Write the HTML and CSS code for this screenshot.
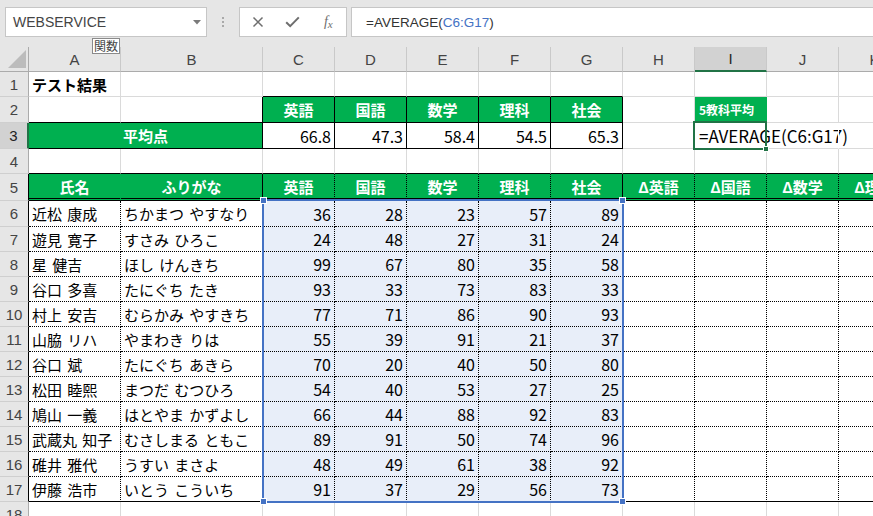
FILE: index.html
```html
<!DOCTYPE html>
<html lang="ja">
<head>
<meta charset="utf-8">
<title>Sheet</title>
<link rel="stylesheet" href="styles.css">
</head>
<body>
<div class="app">
  <div class="toolbar">
    <div class="namebox"><span>WEBSERVICE</span><svg class="nb-arrow" width="8" height="5" viewBox="0 0 8 5"><path d="M0 0H8L4 4.5Z" fill="#7a7a7a"/></svg></div>
    <div class="sep"><span></span><span></span><span></span></div>
    <div class="fxbtns">
      <div class="fxbtn"><svg width="12" height="12" viewBox="0 0 12 12"><path d="M1.5 1.5L10.5 10.5M10.5 1.5L1.5 10.5" stroke="#6e6e6e" stroke-width="1.5" fill="none"/></svg></div>
      <div class="fxbtn"><svg width="15" height="12" viewBox="0 0 15 12"><path d="M1.2 6.2L5.2 10.2L13.8 1.4" stroke="#6e6e6e" stroke-width="2" fill="none"/></svg></div>
      <div class="fxbtn fxlabel"><span class="f">f</span><span class="x">x</span></div>
    </div>
    <div class="formula">=AVERAGE(<span class="ref">C6:G17</span>)</div>
  </div>

  <div class="sheet">
    <div class="row colhdr">
      <div class="corner"><svg width="28" height="24" viewBox="0 0 28 24"><path d="M8 21L26 3V21Z" fill="#bcbcbc"/></svg></div>
      <div>A</div><div>B</div><div>C</div><div>D</div><div>E</div><div>F</div><div>G</div><div>H</div><div class="sel">I</div><div>J</div><div>K</div>
    </div>

    <div class="row r1">
      <div class="rh">1</div>
      <div class="b">テスト結果</div><div></div>
      <div class="bb"></div><div class="bb"></div><div class="bb"></div><div class="bb"></div><div class="bb"></div>
      <div></div><div></div><div></div><div></div>
    </div>

    <div class="row r2">
      <div class="rh">2</div>
      <div class="bb"></div><div class="bb br"></div>
      <div class="g bb br">英語</div><div class="g bb br">国語</div><div class="g bb br">数学</div><div class="g bb br">理科</div><div class="g bb br">社会</div>
      <div></div><div class="g5">5教科平均</div><div></div><div></div>
    </div>

    <div class="row r3">
      <div class="rh sel">3</div>
      <div class="g bb br merge">平均点</div>
      <div class="n bb br">66.8</div><div class="n bb br">47.3</div><div class="n bb br">58.4</div><div class="n bb br">54.5</div><div class="n bb br">65.3</div>
      <div></div><div class="fcell">=AVERAGE(C6:G17)</div><div class="nogrid"></div><div></div>
    </div>

    <div class="row r4">
      <div class="rh">4</div>
      <div></div><div></div><div></div><div></div><div></div><div></div><div></div><div></div><div></div><div></div><div></div>
    </div>

    <div class="row hdr5">
      <div class="rh">5</div>
      <div>氏名</div><div>ふりがな</div><div>英語</div><div>国語</div><div>数学</div><div>理科</div><div>社会</div><div>Δ英語</div><div>Δ国語</div><div>Δ数学</div><div>Δ理科</div>
    </div>

    <div class="row body"><div class="rh">6</div><div>近松 康成</div><div>ちかまつ やすなり</div><div>36</div><div>28</div><div>23</div><div>57</div><div>89</div><div></div><div></div><div></div><div></div></div>
    <div class="row body"><div class="rh">7</div><div>遊見 寛子</div><div>すさみ ひろこ</div><div>24</div><div>48</div><div>27</div><div>31</div><div>24</div><div></div><div></div><div></div><div></div></div>
    <div class="row body"><div class="rh">8</div><div>星 健吉</div><div>ほし けんきち</div><div>99</div><div>67</div><div>80</div><div>35</div><div>58</div><div></div><div></div><div></div><div></div></div>
    <div class="row body"><div class="rh">9</div><div>谷口 多喜</div><div>たにぐち たき</div><div>93</div><div>33</div><div>73</div><div>83</div><div>33</div><div></div><div></div><div></div><div></div></div>
    <div class="row body"><div class="rh">10</div><div>村上 安吉</div><div>むらかみ やすきち</div><div>77</div><div>71</div><div>86</div><div>90</div><div>93</div><div></div><div></div><div></div><div></div></div>
    <div class="row body"><div class="rh">11</div><div>山脇 リハ</div><div>やまわき りは</div><div>55</div><div>39</div><div>91</div><div>21</div><div>37</div><div></div><div></div><div></div><div></div></div>
    <div class="row body"><div class="rh">12</div><div>谷口 斌</div><div>たにぐち あきら</div><div>70</div><div>20</div><div>40</div><div>50</div><div>80</div><div></div><div></div><div></div><div></div></div>
    <div class="row body"><div class="rh">13</div><div>松田 睦熙</div><div>まつだ むつひろ</div><div>54</div><div>40</div><div>53</div><div>27</div><div>25</div><div></div><div></div><div></div><div></div></div>
    <div class="row body"><div class="rh">14</div><div>鳩山 一義</div><div>はとやま かずよし</div><div>66</div><div>44</div><div>88</div><div>92</div><div>83</div><div></div><div></div><div></div><div></div></div>
    <div class="row body"><div class="rh">15</div><div>武蔵丸 知子</div><div>むさしまる ともこ</div><div>89</div><div>91</div><div>50</div><div>74</div><div>96</div><div></div><div></div><div></div><div></div></div>
    <div class="row body"><div class="rh">16</div><div>碓井 雅代</div><div>うすい まさよ</div><div>48</div><div>49</div><div>61</div><div>38</div><div>92</div><div></div><div></div><div></div><div></div></div>
    <div class="row body last"><div class="rh">17</div><div>伊藤 浩市</div><div>いとう こういち</div><div>91</div><div>37</div><div>29</div><div>56</div><div>73</div><div></div><div></div><div></div><div></div></div>

    <div class="row r18">
      <div class="rh">18</div>
      <div></div><div></div><div></div><div></div><div></div><div></div><div></div><div></div><div></div><div></div><div></div>
    </div>

    <div class="selfill"></div>
    <div class="selframe"><span class="h tl"></span><span class="h tr"></span><span class="h bl"></span><span class="h br2"></span></div>
    <div class="active"><span class="fill"></span></div>
  </div>

  <div class="tip">関数</div>
</div>
</body>
</html>
```

FILE: styles.css
```css
* { box-sizing: border-box; }
html, body { margin: 0; padding: 0; }
body {
  width: 873px;
  height: 516px;
  overflow: hidden;
  background: #fff;
  font-family: "Noto Sans CJK JP", "Noto Sans", sans-serif;
}
.app {
  position: relative;
  width: 873px;
  height: 516px;
  overflow: hidden;
}

/* ---------- toolbar ---------- */
.toolbar {
  height: 47px;
  background: #e6e6e6;
  display: flex;
  align-items: flex-start;
  padding: 7px 0 0 5px;
}
.namebox {
  width: 202px;
  height: 30px;
  background: #fff;
  border: 1px solid #c6c6c6;
  display: flex;
  align-items: center;
  justify-content: space-between;
  padding: 0 5px 0 7px;
  font: 14px "Liberation Sans", Arial, sans-serif;
  color: #444;
}
.sep {
  width: 32px;
  height: 30px;
  display: flex;
  flex-direction: column;
  align-items: center;
  justify-content: center;
  gap: 2px;
}
.sep span {
  width: 2px;
  height: 2px;
  background: #a9a9a9;
}
.fxbtns {
  width: 108px;
  height: 30px;
  background: #fff;
  border: 1px solid #c6c6c6;
  display: flex;
}
.fxbtn {
  width: 36px;
  display: flex;
  align-items: center;
  justify-content: center;
}
.fxlabel {
  font: italic 14px "Liberation Serif", serif;
  color: #6e6e6e;
}
.fxlabel .x { font-size: 11px; margin-top: 3px; }
.formula {
  margin-left: 4px;
  flex: 1;
  height: 30px;
  background: #fff;
  border: 1px solid #c6c6c6;
  border-right: none;
  padding-left: 14px;
  display: flex;
  align-items: center;
  font: 13.5px "Liberation Sans", Arial, sans-serif;
  color: #333;
}
.ref { color: #4472c4; }

/* ---------- sheet ---------- */
.sheet {
  position: relative;
  z-index: 0;
  background: #fff;
  display: grid;
  grid-template-columns: 29px 92px 142px repeat(9, 72px);
  grid-template-rows: 25px 25px 26px 26px 25px 27px 26px repeat(11, 25px) 25px;
}
.row { display: contents; }
.row > div {
  border-right: 1px solid #dadada;
  border-bottom: 1px solid #dadada;
  display: flex;
  align-items: center;
  padding: 0 3px;
  font-size: 15px;
  color: #000;
  white-space: nowrap;
  min-width: 0;
}
.row > .rh {
  background: #e6e6e6;
  border-right: 1px solid #ababab;
  border-bottom: 1px solid #cfcfcf;
  justify-content: center;
  padding: 0;
  font: 15px "Liberation Sans", Arial, sans-serif;
  color: #444;
}
.row > .rh.sel {
  background: #d2d2d2;
  border-right: 2px solid #217346;
  color: #222;
}

.colhdr > div {
  background: #e6e6e6;
  border-right: 1px solid #c9c9c9;
  border-bottom: 1px solid #ababab;
  justify-content: center;
  padding: 0;
  font: 15px "Liberation Sans", Arial, sans-serif;
  color: #444;
}
.colhdr > .corner {
  border-right-color: #ababab;
  align-items: flex-start;
  justify-content: flex-start;
}
.colhdr > .sel {
  background: #d2d2d2;
  border-bottom: 2px solid #217346;
  color: #222;
}

.row > .b { font-weight: 700; }
.row > .bb { border-bottom: 1px solid #000; }
.row > .br { border-right: 1px solid #000; }
.row > .n { justify-content: flex-end; font-size: 16px; }
.row > .g {
  background: #00b050;
  color: #fff;
  font-weight: 700;
  justify-content: center;
}
.row > .merge { grid-column: span 2; }
.row > .g5 {
  background: #00b050;
  color: #fff;
  font-weight: 700;
  font-size: 12px;
  padding-left: 4px;
  border-color: #00b050;
}
.row > .fcell {
  padding-left: 4px;
  font-size: 17px;
  overflow: visible;
}
.row > .nogrid { border-right-color: #fff; }

.r4 > div { border-bottom: 1px solid #000; }

.hdr5 > div {
  background: #00b050;
  color: #fff;
  font-weight: 700;
  justify-content: center;
  border-right: 1px dotted #000;
  border-bottom: 3px double #000;
}
.hdr5 > div:nth-child(2) { border-right: 1px solid #00b050; }
.hdr5 > div:nth-child(3),
.hdr5 > div:nth-child(8) { border-right: 1px solid #000; }
.hdr5 > .rh,
.body > .rh { border-right-color: #000; }

.body > div {
  border-right: 1px dotted #000;
  border-bottom: 1px dotted #000;
  word-spacing: 2px;
}
.body > div:nth-child(3),
.body > div:nth-child(8) { border-right: 1px solid #000; }
.body > div:nth-child(n+4):nth-child(-n+8) {
  justify-content: flex-end;
  font-size: 16px;
}
.last > div { border-bottom: 1px solid #000; }

/* ---------- overlays ---------- */
.selfill {
  position: absolute;
  grid-column: 4 / 9;
  grid-row: 7 / 19;
  top: 0; left: 0; right: 0; bottom: 0;
  background: #e8eef9;
  z-index: -1;
}
.selframe {
  position: absolute;
  grid-column: 4 / 9;
  grid-row: 7 / 19;
  top: -2px; left: -1px; right: -1px; bottom: -1px;
  border: 2px solid #4472c4;
  z-index: 2;
}
.selframe .h {
  position: absolute;
  width: 7px;
  height: 7px;
  background: #4472c4;
  border: 1px solid #fff;
}
.selframe .tl { left: -4px; top: -4px; }
.selframe .tr { right: -4px; top: -4px; }
.selframe .bl { left: -4px; bottom: -4px; }
.selframe .br2 { right: -4px; bottom: -4px; }

.active {
  position: absolute;
  grid-column: 10 / 11;
  grid-row: 4 / 5;
  top: -2px; left: -2px; right: 0; bottom: -1px;
  border: 2px solid #217346;
  z-index: 3;
}
.active .fill {
  position: absolute;
  right: -4px;
  bottom: -4px;
  width: 6px;
  height: 6px;
  background: #217346;
  border: 1px solid #fff;
}

.tip {
  position: absolute;
  left: 92px;
  top: 38px;
  width: 28px;
  height: 16px;
  background: #fff;
  border: 1px solid #8a8a8a;
  font-size: 12px;
  line-height: 1;
  color: #444;
  display: flex;
  align-items: center;
  justify-content: center;
  z-index: 5;
}
```
